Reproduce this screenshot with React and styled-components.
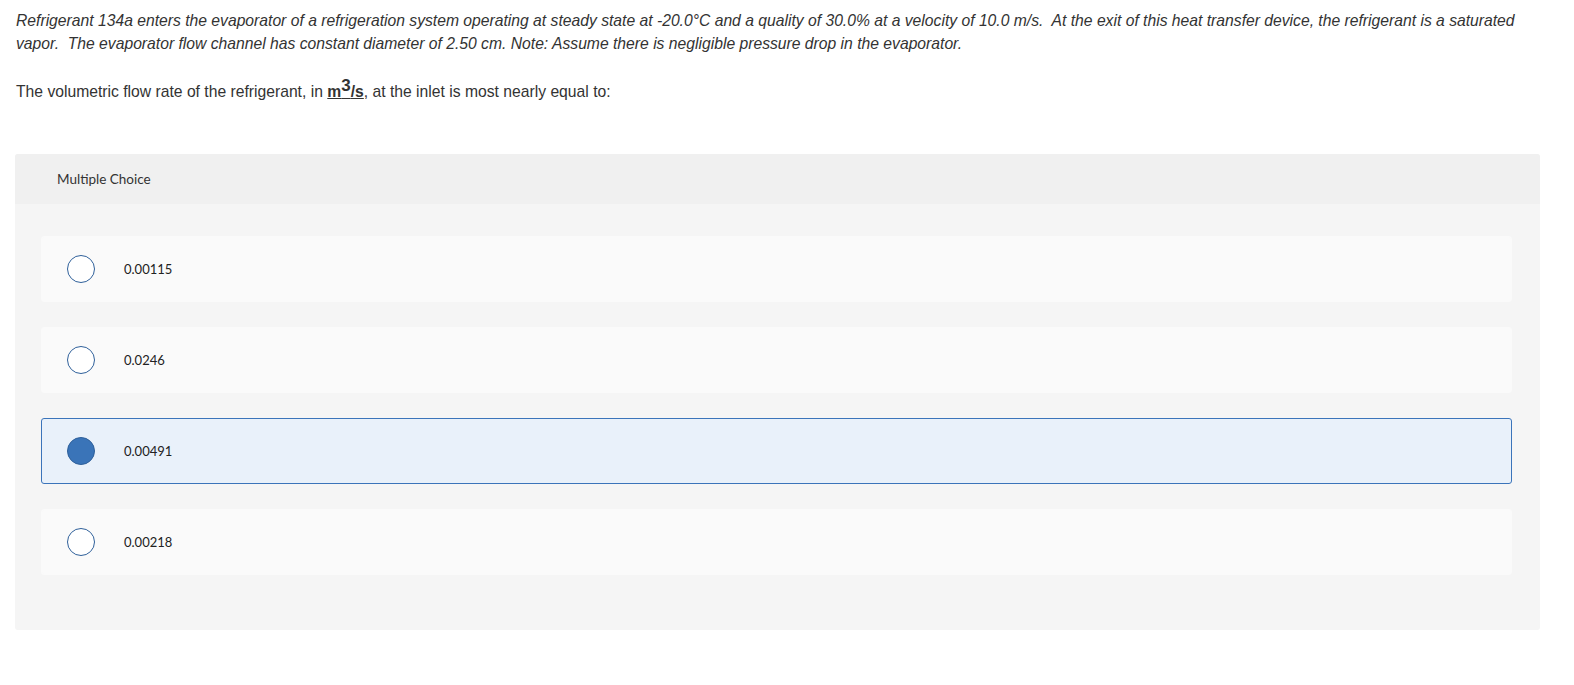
import React from "react";
import styled, { createGlobalStyle } from "styled-components";

const GlobalStyle = createGlobalStyle`
    body {
        margin: 0;
        background: #fff;
        font-family: Lato, "Open Sans", Arial, sans-serif;
        color: #333;
    }
`;

const choices = ["0.00115", "0.0246", "0.00491", "0.00218"];

function App() {
    const selected = 2;
    return (
        <>
            <GlobalStyle />
            <Page>
                <Prompt>
                    Refrigerant 134a enters the evaporator of a refrigeration system operating at steady state at -20.0°C and a quality of 30.0% at a velocity of 10.0 m/s.&nbsp; At the exit of this heat transfer device, the refrigerant is a saturated
                    <br />
                    vapor.&nbsp; The evaporator flow channel has constant diameter of 2.50 cm. Note: Assume there is negligible pressure drop in the evaporator.
                </Prompt>
                <Question>
                    The volumetric flow rate of the refrigerant, in{" "}
                    <Unit>
                        m<sup>3</sup>/s
                    </Unit>
                    , at the inlet is most nearly equal to:
                </Question>
                <Panel>
                    <PanelHeader>Multiple Choice</PanelHeader>
                    <Choices>
                        {choices.map((val, i) => (
                            <Choice key={val} $active={i === selected}>
                                <Radio $active={i === selected} />
                                <ChoiceText>{val}</ChoiceText>
                            </Choice>
                        ))}
                    </Choices>
                </Panel>
            </Page>
        </>
    );
}

export default App;

const Page = styled.div`
    padding: 9px 34px 40px 15px;
`;
const Prompt = styled.p`
    margin: 0;
    padding-left: 1px;
    font-family: "Liberation Sans", Arial, sans-serif;
    font-size: 15.7px;
    line-height: 23px;
    font-style: italic;
    white-space: nowrap;
`;
const Question = styled.p`
    margin: 25px 0 0;
    padding-left: 1px;
    font-family: "Liberation Sans", Arial, sans-serif;
    font-size: 15.7px;
    line-height: 23px;
`;
const Unit = styled.span`
    font-weight: bold;
    text-decoration: underline;
    sup {
        font-size: 17px;
        line-height: 0;
    }
`;
const Panel = styled.div`
    margin-top: 51px;
    background-color: #f5f5f5;
    border-radius: 3px;
    overflow: hidden;
`;
const PanelHeader = styled.div`
    height: 50px;
    display: flex;
    align-items: center;
    padding-left: 42px;
    background-color: #f0f0f0;
    font-size: 13.5px;
    color: #333;
`;
const Choices = styled.div`
    display: flex;
    flex-direction: column;
    gap: 25px;
    padding: 32px 28px 55px 26px;
`;
const Choice = styled.div`
    height: 66px;
    box-sizing: border-box;
    display: flex;
    align-items: center;
    padding-left: 25px;
    border-radius: 3px;
    background-color: ${(p) => (p.$active ? "#e9f1fa" : "#fafafa")};
    border: 1px solid ${(p) => (p.$active ? "#3b74ba" : "#fafafa")};
`;
const Radio = styled.span`
    width: 28px;
    height: 28px;
    box-sizing: border-box;
    border-radius: 50%;
    border: 1.5px solid #2f609a;
    background-color: ${(p) => (p.$active ? "#3a74b8" : "#fff")};
    flex-shrink: 0;
`;
const ChoiceText = styled.span`
    margin-left: 29px;
    font-size: 13px;
    color: #222;
`;
